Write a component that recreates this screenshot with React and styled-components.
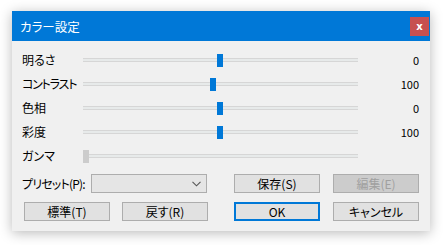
import styled, { createGlobalStyle } from 'styled-components';

const Global = createGlobalStyle`
  html, body {
    margin: 0;
    padding: 0;
    background: #ffffff;
  }
  body {
    font-family: "Noto Sans CJK JP", "Noto Sans", sans-serif;
    font-size: 12px;
    font-feature-settings: "palt";
  }
`;

const Page = styled.div`
  width: 443px;
  height: 245px;
  padding: 11px 0 0 12px;
  box-sizing: border-box;
`;

const Window = styled.div`
  width: 418px;
  background: #f0f0f0;
  box-shadow: 0 2px 12px rgba(0, 0, 0, 0.28);
`;

const TitleBar = styled.div`
  height: 30px;
  background: #0078d7;
  display: flex;
  align-items: center;
  justify-content: space-between;
  padding-left: 8px;
  color: #ffffff;
  font-size: 12.5px;
`;

const CloseButton = styled.div`
  width: 19px;
  height: 19px;
  margin-right: 1px;
  margin-top: 1px;
  background: #c75050;
  color: #ffffff;
  font-family: "DejaVu Sans", sans-serif;
  font-weight: bold;
  font-size: 10px;
  display: flex;
  align-items: center;
  justify-content: center;
`;

const Body = styled.div`
  padding: 7px 11px 10px 10px;
`;

const SliderRow = styled.div`
  height: 24px;
  display: grid;
  grid-template-columns: 61px 275px 1fr;
  align-items: center;
  color: #000000;
`;

const Label = styled.div`
  line-height: 14px;
  white-space: nowrap;
  letter-spacing: ${p => (p.$tight ? '-1.2px' : '0')};
`;

const Track = styled.div`
  position: relative;
  height: 4px;
  box-sizing: border-box;
  border-top: 1px solid #d6d6d6;
  border-bottom: 1px solid #d6d6d6;
  background: #e7eaea;
`;

const Thumb = styled.div`
  position: absolute;
  top: -5px;
  width: 6px;
  height: 13px;
  background: ${p => (p.$disabled ? '#cccccc' : '#0078d7')};
`;

const Value = styled.div`
  text-align: right;
  font-size: 11px;
`;

const ControlRow = styled.div`
  display: grid;
  grid-template-columns: ${p => p.$cols};
  align-items: center;
  height: 19px;
  margin-top: ${p => p.$top}px;
`;

const PresetLabel = styled.div`
  line-height: 14px;
  white-space: nowrap;
  letter-spacing: -0.8px;
`;

const Select = styled.div`
  height: 19px;
  box-sizing: border-box;
  border: 1px solid #adadad;
  background: #e5e5e5;
  display: flex;
  align-items: center;
  justify-content: flex-end;
  padding-right: 5px;
`;

const Button = styled.div`
  height: 19px;
  box-sizing: border-box;
  border: ${p => (p.$default ? '2px solid #0078d7' : '1px solid #adadad')};
  background: ${p => (p.$disabled ? '#cccccc' : '#e1e1e1')};
  color: ${p => (p.$disabled ? '#a0a0a0' : '#000000')};
  display: flex;
  align-items: center;
  justify-content: center;
  line-height: 14px;
  white-space: nowrap;
`;

const Spacer = styled.div``;

const sliders = [
  { label: '明るさ', pos: 134, value: '0' },
  { label: 'コントラスト', pos: 127, value: '100', tight: true },
  { label: '色相', pos: 134, value: '0' },
  { label: '彩度', pos: 134, value: '100' },
  { label: 'ガンマ', pos: 0, value: '', disabled: true },
];

export default function App() {
  return (
    <Page>
      <Global />
      <Window>
        <TitleBar>
          <span>カラー設定</span>
          <CloseButton>x</CloseButton>
        </TitleBar>
        <Body>
          {sliders.map(s => (
            <SliderRow key={s.label}>
              <Label $tight={s.tight}>{s.label}</Label>
              <Track>
                <Thumb $disabled={s.disabled} style={{ left: s.pos }} />
              </Track>
              <Value>{s.value}</Value>
            </SliderRow>
          ))}
          <ControlRow $top={6} $cols="69px 116px 27px 86px 13px 86px">
            <PresetLabel>プリセット(P):</PresetLabel>
            <Select>
              <svg width="9" height="6" viewBox="0 0 9 6">
                <path d="M0.5 0.8 L4.5 4.8 L8.5 0.8" fill="none" stroke="#555" strokeWidth="1.1" />
              </svg>
            </Select>
            <Spacer />
            <Button>保存(S)</Button>
            <Spacer />
            <Button $disabled>編集(E)</Button>
          </ControlRow>
          <ControlRow $top={9} $cols="2px 86px 12px 86px 26px 86px 13px 86px">
            <Spacer />
            <Button>標準(T)</Button>
            <Spacer />
            <Button>戻す(R)</Button>
            <Spacer />
            <Button $default>OK</Button>
            <Spacer />
            <Button>キャンセル</Button>
          </ControlRow>
        </Body>
      </Window>
    </Page>
  );
}
